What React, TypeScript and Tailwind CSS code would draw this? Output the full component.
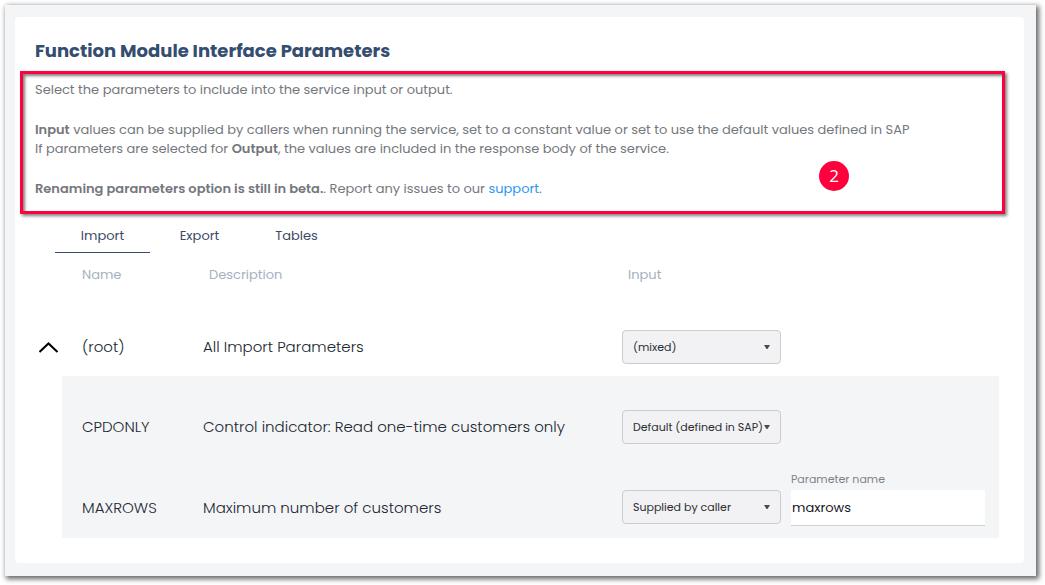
import { useState } from "react";

const cellText = "h-[34px] leading-[34px] text-[15px] font-light text-[#20262f]";

function ModeSelect({ label, value, options }: { label: string; value: string; options: string[] }) {
  const [mode, setMode] = useState(value);
  return (
    <div className="relative w-[159px]">
      <select
        aria-label={label}
        value={mode}
        onChange={(e) => setMode(e.target.value)}
        className="block h-[34px] w-full appearance-none rounded border border-[#cccccc] bg-[#f2f2f4] pl-[10px] pr-1 text-[11px] text-[#2b2e33]"
      >
        {options.map((o) => (
          <option key={o}>{o}</option>
        ))}
      </select>
      <svg className="pointer-events-none absolute right-[11px] top-[15px]" width="6" height="5" viewBox="0 0 6 5" aria-hidden="true">
        <path d="M0 0h6L3.5 4h-1z" fill="#4a4a4a" />
      </svg>
    </div>
  );
}

const modes = ["Default (defined in SAP)", "Supplied by caller", "Constant"];

export default function App() {
  const [tab, setTab] = useState("Import");
  const [open, setOpen] = useState(true);
  const [name, setName] = useState("maxrows");

  return (
    <div className="bg-white pt-[5px] pr-[9px] pb-[9px] pl-[5px] font-['Poppins','Inter',sans-serif]">
      <div className="bg-[#f4f5f7] pt-3 pr-3 pb-[13px] pl-[10px] shadow-[2px_2px_5px_1px_rgba(0,0,0,0.6)]">
        <main className="rounded bg-white pb-[25px]">
          <h1 className="px-5 pt-[21px] pb-[7px] text-[18px] font-bold leading-[26px] text-[#344d70]">
            Function Module Interface Parameters
          </h1>

          <section className="relative mr-[19px] ml-[5px] border-3 border-[#ff003c] px-3 pt-[6px] pb-3 text-[13px] leading-5 text-[#74777d] shadow-[2px_2px_3px_rgba(0,0,0,0.5),inset_2px_2px_3px_rgba(0,0,0,0.5)]">
            <p>Select the parameters to include into the service input or output.</p>
            <p className="mt-5">
              <b className="font-semibold">Input</b> values can be supplied by callers when running the service, set to a
              constant value or set to use the default values defined in SAP
            </p>
            <p className="-mt-px">
              If parameters are selected for <b className="font-semibold">Output</b>, the values are included in the
              response body of the service.
            </p>
            <p className="mt-5">
              <b className="font-semibold">Renaming parameters option is still in beta.</b>. Report any issues to our{" "}
              <a href="#support" className="text-[#2b98f0]">
                support
              </a>
              .
            </p>
            <span className="absolute top-[87px] right-[153px] flex size-[30px] items-center justify-center rounded-full bg-[#ff003c] font-['Open_Sans',sans-serif] text-[17px] text-white">
              2
            </span>
          </section>

          <div role="tablist" className="ml-10 flex gap-[2px] pt-[5px]">
            {["Import", "Export", "Tables"].map((t) => (
              <button
                key={t}
                type="button"
                role="tab"
                aria-selected={tab === t}
                onClick={() => setTab(t)}
                className={
                  tab === t
                    ? "h-[34px] w-[95px] border-b border-[#344d70] text-[13px] text-[#3d4a66]"
                    : "h-[34px] w-[95px] border-b border-transparent text-[13px] text-[#3d4a66]"
                }
              >
                {t}
              </button>
            ))}
          </div>

          <div className="pr-[25px]">
            <table className="w-full table-fixed border-collapse text-left">
              <colgroup>
                <col className="w-[47px]" />
                <col className="w-[141px]" />
                <col />
                <col className="w-[169px]" />
                <col className="w-[208px]" />
              </colgroup>
              <thead>
                <tr className="h-16 align-top text-[13px] leading-5 text-[#a6b0c0]">
                  <td />
                  <th scope="col" className="pt-3 pl-5 font-normal">Name</th>
                  <th scope="col" className="pt-3 pl-[6px] font-normal">Description</th>
                  <th scope="col" className="pt-3 pl-[6px] font-normal">Input</th>
                  <td />
                </tr>
              </thead>
              <tbody>
                <tr className="h-[59px] align-bottom">
                  <td className="pb-3 pl-6">
                    <button
                      type="button"
                      aria-label="Toggle parameters"
                      aria-expanded={open}
                      onClick={() => setOpen(!open)}
                      className="flex h-[34px] items-center"
                    >
                      <svg width="20" height="12" viewBox="0 0 20 12" fill="none" aria-hidden="true">
                        <path d="M0.5 11L9.5 2.5L18.5 11" stroke="#000" strokeWidth="2" />
                      </svg>
                    </button>
                  </td>
                  <td className="pb-3 pl-5"><div className={cellText}>(root)</div></td>
                  <td className="pb-3"><div className={cellText}>All Import Parameters</div></td>
                  <td className="pb-3">
                    <ModeSelect label="Input for all parameters" value="(mixed)" options={["(mixed)", ...modes]} />
                  </td>
                  <td />
                </tr>
                {open && (
                  <>
                    <tr className="h-[81px] align-bottom">
                      <td />
                      <td className="bg-[#f4f5f7] pb-[13px] pl-5"><div className={cellText}>CPDONLY</div></td>
                      <td className="bg-[#f4f5f7] pb-[13px]">
                        <div className={cellText}>Control indicator: Read one-time customers only</div>
                      </td>
                      <td className="bg-[#f4f5f7] pb-[13px]">
                        <ModeSelect label="Input for CPDONLY" value="Default (defined in SAP)" options={modes} />
                      </td>
                      <td className="bg-[#f4f5f7]" />
                    </tr>
                    <tr className="h-[81px] align-bottom">
                      <td />
                      <td className="bg-[#f4f5f7] pb-[13px] pl-5"><div className={cellText}>MAXROWS</div></td>
                      <td className="bg-[#f4f5f7] pb-[13px]"><div className={cellText}>Maximum number of customers</div></td>
                      <td className="bg-[#f4f5f7] pb-[14px]">
                        <ModeSelect label="Input for MAXROWS" value="Supplied by caller" options={modes} />
                      </td>
                      <td className="bg-[#f4f5f7] pr-[14px] pb-3">
                        <label htmlFor="param-name" className="block pb-[3px] text-[11px] leading-4 text-[#7f8388]">
                          Parameter name
                        </label>
                        <input
                          id="param-name"
                          value={name}
                          onChange={(e) => setName(e.target.value)}
                          className="block h-9 w-full border-b border-[#cfd1d5] bg-white pl-px text-[13px] text-[#16181c] outline-none"
                        />
                      </td>
                    </tr>
                  </>
                )}
              </tbody>
            </table>
          </div>
        </main>
      </div>
    </div>
  );
}
